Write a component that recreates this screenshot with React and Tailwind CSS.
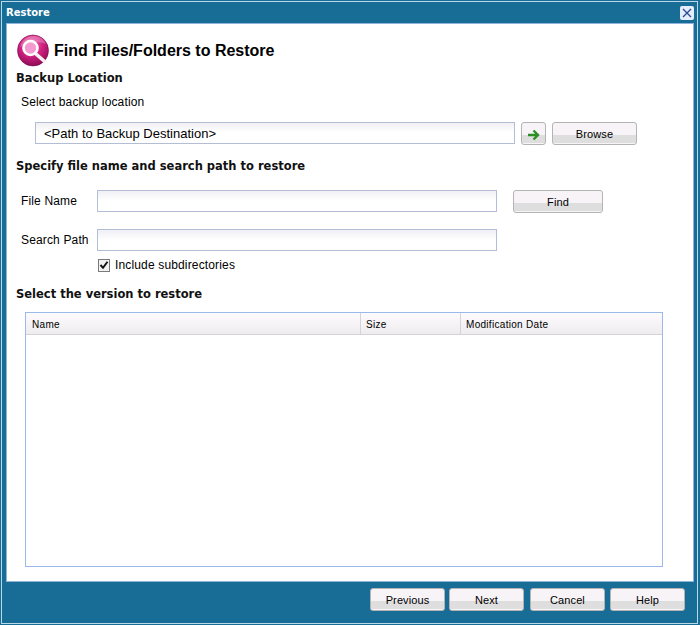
import React from 'react';

const body = 'font-["Liberation_Sans",Arial,sans-serif] text-[12px] tracking-[0.15px] text-black';
const heading = 'font-["DejaVu_Sans",Verdana,sans-serif] font-bold text-[11.5px] leading-[14px] text-[#111]';

function SkinButton({ children, className = '' }) {
    return (
        <button className={`relative flex h-[23px] items-center justify-center overflow-hidden rounded-[3px] border border-[#b4b4b4] bg-[#f7f3f7] font-["Liberation_Sans",Arial,sans-serif] text-[11px] tracking-[0.1px] text-black ${className}`}>
            <span className="absolute inset-x-0 bottom-[1px] h-[8px] bg-[#dedede]" />
            <span className="relative top-[1px]">{children}</span>
        </button>
    );
}

function TextBox({ value, className = '' }) {
    return (
        <div className={`flex h-[22px] items-center border border-[#b3bdd6] bg-gradient-to-b from-[#f0f0f5] via-white to-white px-2 pt-px ${className}`}>
            {value && <span className='font-["Liberation_Sans",Arial,sans-serif] text-[13px] text-black'>{value}</span>}
        </div>
    );
}

function FindIcon() {
    return (
        <svg width="32" height="33" viewBox="0 0 32 33" className="shrink-0">
            <defs>
                <radialGradient id="orb" cx="45%" cy="30%" r="75%">
                    <stop offset="0%" stopColor="#f070b8" />
                    <stop offset="50%" stopColor="#d0207f" />
                    <stop offset="100%" stopColor="#86084f" />
                </radialGradient>
            </defs>
            <circle cx="16" cy="16.500" r="15.500" fill="url(#orb)" stroke="#7a0a4c" strokeWidth="0.600" />
            <path d="M3 13C5 5 11 2 17 2c6 0 10 3 12 8-8-3-18-2-26 3z" fill="#fff" opacity="0.250" />
            <path d="M19 20l8 7" stroke="#f4f0f2" strokeWidth="3.600" strokeLinecap="round" />
            <circle cx="13.500" cy="14" r="7" fill="#f49ad0" stroke="#fff" strokeWidth="2.600" />
        </svg>
    );
}

function GreenArrow() {
    return (
        <svg width="13" height="12" viewBox="0 0 13 12">
            <path d="M1 6h9M6.500 1.500L11 6l-4.500 4.500" fill="none" stroke="#2c8f24" strokeWidth="2.400" />
        </svg>
    );
}

export default function App() {
    return (
        <div className="h-[625px] w-[700px] overflow-hidden bg-[#186d96] p-px">
            <div className="flex h-[623px] w-[697px] flex-col border border-[#b9d9e8] pl-[4px] pr-[3px]">
                {/* Title bar */}
                <div className="flex h-[21px] shrink-0 items-center justify-between">
                    <span className='font-["DejaVu_Sans",Verdana,sans-serif] text-[10px] font-bold text-white'>Restore</span>
                    <div className="flex h-[14px] w-[14px] items-center justify-center rounded-[2px] bg-[#e4edfb]">
                        <svg width="10" height="10" viewBox="0 0 10 10">
                            <path d="M1 1l8 8M9 1l-8 8" stroke="#2c4a94" strokeWidth="1.300" />
                        </svg>
                    </div>
                </div>

                {/* Panel */}
                <div className="flex h-[559px] shrink-0 flex-col border border-[#8fb4dc] bg-white pl-[9px] pr-[29px] pt-[10px]">
                    <div className="ml-[1px] flex h-[33px] items-center gap-[5px]">
                        <FindIcon />
                        <span className='font-["Liberation_Sans",Arial,sans-serif] text-[16px] font-bold text-black'>Find Files/Folders to Restore</span>
                    </div>

                    <div className={`mt-[4px] ${heading}`}>Backup Location</div>
                    <div className={`ml-[5px] mt-[10px] leading-[14px] ${body}`}>Select backup location</div>

                    <div className="ml-[19px] mt-[13px] flex items-start">
                        <TextBox value="<Path to Backup Destination>" className="w-[480px]" />
                        <SkinButton className="ml-[6px] w-[25px]">
                            <GreenArrow />
                        </SkinButton>
                        <SkinButton className="ml-[6px] w-[85px]">Browse</SkinButton>
                    </div>

                    <div className={`mt-[14px] ${heading}`}>Specify file name and search path to restore</div>

                    <div className="ml-[5px] mt-[17px] flex items-start">
                        <span className={`w-[76px] leading-[22px] ${body}`}>File Name</span>
                        <TextBox className="w-[400px]" />
                        <SkinButton className="ml-[16px] w-[90px]">Find</SkinButton>
                    </div>

                    <div className="ml-[5px] mt-[16px] flex items-start">
                        <span className={`w-[76px] leading-[22px] ${body}`}>Search Path</span>
                        <TextBox className="w-[400px]" />
                    </div>

                    <div className="ml-[82px] mt-[7px] flex h-[14px] items-center gap-[5px]">
                        <div className="flex h-[13px] w-[12px] items-center justify-center border border-[#7a7a7a] bg-[#f2f2f2]">
                            <svg width="10" height="10" viewBox="0 0 10 10">
                                <path d="M1.500 5l2.500 2.800L8.500 1.800" fill="none" stroke="#111" strokeWidth="1.900" />
                            </svg>
                        </div>
                        <span className={body}>Include subdirectories</span>
                    </div>

                    <div className={`mt-[15px] ${heading}`}>Select the version to restore</div>

                    {/* Results table */}
                    <div className="ml-[9px] mt-[11px] h-[255px] w-[638px] border border-[#9bb9e8]">
                        <div className='flex h-[22px] border-b border-[#d4d4d4] bg-gradient-to-b from-[#fdfbfd] to-[#eeecee] font-["Liberation_Sans",Arial,sans-serif] text-[10px] tracking-[0.3px] text-black'>
                            <div className="flex w-[335px] items-center border-r border-[#d4d4d4] pl-[6px] pt-px">Name</div>
                            <div className="flex w-[100px] items-center border-r border-[#d4d4d4] pl-[5px] pt-px">Size</div>
                            <div className="flex flex-1 items-center pl-[5px] pt-px">Modification Date</div>
                        </div>
                    </div>
                </div>

                {/* Footer */}
                <div className="flex flex-1 items-start pl-[364px] pt-[6px]">
                    <SkinButton className="w-[75px]">Previous</SkinButton>
                    <SkinButton className="ml-[4px] w-[75px]">Next</SkinButton>
                    <SkinButton className="ml-[6px] w-[75px]">Cancel</SkinButton>
                    <SkinButton className="ml-[5px] w-[75px]">Help</SkinButton>
                </div>
            </div>
        </div>
    );
}
